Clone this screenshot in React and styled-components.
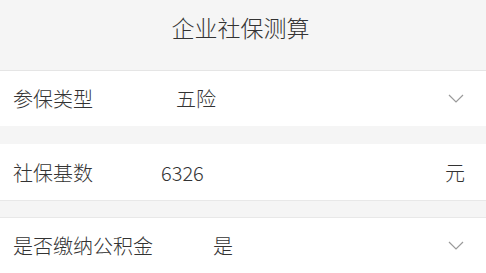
import styled, { createGlobalStyle } from 'styled-components'

const Global = createGlobalStyle`
    body{
        margin:0;
        background:#f5f5f5;
        font-family:"Noto Sans CJK SC","Noto Sans",sans-serif;
        font-weight:300;
        color:#333;
    }
`

const Page = styled.div`
    display:flex;
    flex-direction:column;
`
const Header = styled.div`
    height:71px;
    padding-top:11px;
    box-sizing:border-box;
    text-align:center;
    font-size:23px;
    line-height:32px;
    color:#333;
    border-bottom:1px solid #e5e5e5;
    padding-right:5px;
`
const Row = styled.div`
    display:flex;
    align-items:center;
    background:#fff;
    height:${p => p.h}px;
    padding:0 20px 0 13px;
    margin-top:${p => p.gap || 0}px;
    border-top:${p => p.topLine ? '1px solid #e8e8e8' : 'none'};
    border-bottom:${p => p.bottomLine ? '1px solid #e8e8e8' : 'none'};
    font-size:20px;
`
const Label = styled.span`
    width:${p => p.w}px;
    flex-shrink:0;
`
const Value = styled.span`
    flex:1;
`
const Unit = styled.span`
    margin-right:1px;
`
const Arrow = () => (
    <svg width="16" height="9" viewBox="0 0 16 9" style={{marginRight: 2}}>
        <path d="M1 1 L8 8 L15 1" fill="none" stroke="#9a9a9a" strokeWidth="1.2" />
    </svg>
)

export default function App(){
    return (
        <Page>
            <Global />
            <Header>企业社保测算</Header>
            <Row h={55}>
                <Label w={163}>参保类型</Label>
                <Value>五险</Value>
                <Arrow />
            </Row>
            <Row h={56} gap={18} bottomLine>
                <Label w={148}>社保基数</Label>
                <Value>6326</Value>
                <Unit>元</Unit>
            </Row>
            <Row h={55} gap={16} topLine>
                <Label w={200}>是否缴纳公积金</Label>
                <Value>是</Value>
                <Arrow />
            </Row>
        </Page>
    )
}
